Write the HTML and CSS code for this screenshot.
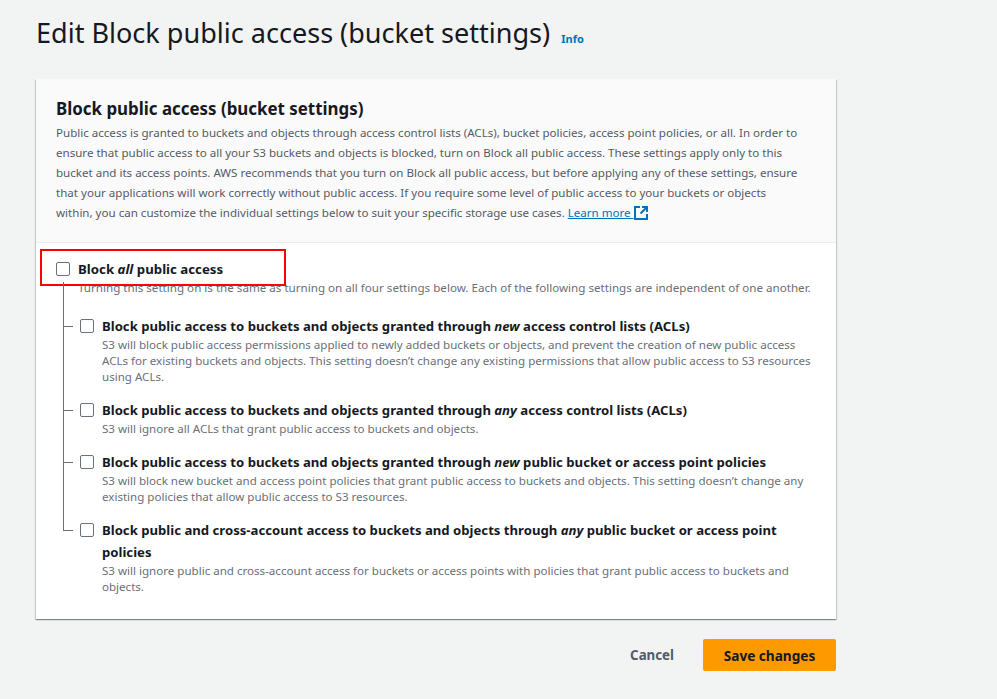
FILE: index.html
```html
<!DOCTYPE html>
<html lang="en">
<head>
<meta charset="utf-8">
<title>Edit Block public access (bucket settings)</title>
<link rel="stylesheet" href="styles.css">
</head>
<body>
<main class="page">
  <header class="page-header">
    <h1>Edit Block public access (bucket settings)</h1>
    <a class="info" href="#">Info</a>
  </header>
  <section class="card">
    <div class="card-head">
      <h2>Block public access (bucket settings)</h2>
      <p>Public access is granted to buckets and objects through access control lists (ACLs), bucket policies, access point policies, or all. In order to<br>ensure that public access to all your S3 buckets and objects is blocked, turn on Block all public access. These settings apply only to this<br>bucket and its access points. AWS recommends that you turn on Block all public access, but before applying any of these settings, ensure<br>that your applications will work correctly without public access. If you require some level of public access to your buckets or objects<br>within, you can customize the individual settings below to suit your specific storage use cases. <a class="learn" href="#">Learn more </a><svg class="ext" width="14" height="14" viewBox="0 0 14 14" aria-hidden="true"><path d="M6 1H1V13H13V8" fill="none" stroke="#0073bb" stroke-width="2"/><path d="M8 1H13V6" fill="none" stroke="#0073bb" stroke-width="2"/><path d="M12.500 1.500L6.500 7.500" fill="none" stroke="#0073bb" stroke-width="2"/></svg></p>
    </div>
    <div class="card-body">
      <div class="master">
        <span class="check"></span>
        <strong class="master-label">Block <em>all</em> public access</strong>
      </div>
      <p class="master-desc">Turning this setting on is the same as turning on all four settings below. Each of the following settings are independent of one another.</p>
      <span class="highlight"></span>
      <ul class="tree">
        <li class="opt opt-1">
          <span class="check"></span>
          <div>
            <strong>Block public access to buckets and objects granted through <em>new</em> access control lists (ACLs)</strong>
            <p>S3 will block public access permissions applied to newly added buckets or objects, and prevent the creation of new public access<br>ACLs for existing buckets and objects. This setting doesn’t change any existing permissions that allow public access to S3 resources<br>using ACLs.</p>
          </div>
        </li>
        <li class="opt opt-2">
          <span class="check"></span>
          <div>
            <strong>Block public access to buckets and objects granted through <em>any</em> access control lists (ACLs)</strong>
            <p>S3 will ignore all ACLs that grant public access to buckets and objects.</p>
          </div>
        </li>
        <li class="opt opt-3">
          <span class="check"></span>
          <div>
            <strong>Block public access to buckets and objects granted through <em>new</em> public bucket or access point policies</strong>
            <p>S3 will block new bucket and access point policies that grant public access to buckets and objects. This setting doesn’t change any<br>existing policies that allow public access to S3 resources.</p>
          </div>
        </li>
        <li class="opt opt-4">
          <span class="check"></span>
          <div>
            <strong>Block public and cross-account access to buckets and objects through <em>any</em> public bucket or access point<br>policies</strong>
            <p>S3 will ignore public and cross-account access for buckets or access points with policies that grant public access to buckets and<br>objects.</p>
          </div>
        </li>
      </ul>
    </div>
  </section>
  <footer class="actions">
    <a class="cancel" href="#">Cancel</a>
    <button class="save" type="button">Save changes</button>
  </footer>
</main>
</body>
</html>
```
FILE: styles.css
```css
* { box-sizing: border-box; }
html, body { margin: 0; padding: 0; }
body {
  background: #f2f3f3;
  color: #16191f;
  font-family: "Noto Sans", "Open Sans", sans-serif;
  height: 699px;
  overflow: hidden;
}
.page { width: 836px; margin-left: 36px; padding-top: 14px; }
.page-header { display: flex; align-items: baseline; height: 65px; }
h1 { margin: 0; font-size: 27.050px; font-weight: 400; line-height: 38px; }
.info { margin-left: 11px; font-size: 11px; font-weight: 700; color: #0073bb; text-decoration: none; }
.card {
  width: 800px;
  background: #fff;
  box-shadow: 0 1px 1px 0 rgba(0,28,36,.3), 1px 1px 1px 0 rgba(0,28,36,.15), -1px 1px 1px 0 rgba(0,28,36,.15);
  position: relative;
}
.card-head {
  height: 164px;
  padding: 19px 20px 0;
  background: #fafafa;
  border-bottom: 1px solid #eaeded;
}
h2 { margin: 0; font-size: 16.900px; font-weight: 700; line-height: 22px; }
.card-head p { margin: 3px 0 0; font-size: 11.570px; line-height: 20px; color: #545b64; white-space: nowrap; }
.learn { color: #0073bb; }
.ext { vertical-align: -3px; }
.card-body { position: relative; padding: 16px 0 0 20px; height: 376px; }
.check {
  display: block;
  flex: none;
  width: 14px;
  height: 14px;
  background: #fff;
  border: 1px solid #687078;
  border-radius: 2px;
}
.master { display: flex; align-items: center; gap: 8px; height: 20px; }
.master-label { font-size: 13.250px; line-height: 20px; }
.master-desc { margin: 0 0 0 22px; font-size: 11.620px; line-height: 17px; color: #687078; white-space: nowrap; }
.highlight {
  position: absolute;
  left: 4px;
  top: 6px;
  width: 246px;
  height: 37px;
  border: 2px solid #f00;
  pointer-events: none;
}
.tree { list-style: none; margin: 0; padding: 0; position: relative; }
.tree::before {
  content: "";
  position: absolute;
  left: 7px;
  top: -33px;
  bottom: 64px;
  width: 1px;
  background: #687078;
}
.opt { display: flex; gap: 8px; margin-left: 24px; position: relative; }
.opt::before {
  content: "";
  position: absolute;
  left: -17px;
  top: 11px;
  width: 10px;
  height: 1px;
  background: #687078;
}
.opt .check { margin-top: 4px; }
.opt strong { display: block; font-size: 13.150px; line-height: 22px; white-space: nowrap; }
.opt p { margin: 0; font-size: 11.570px; line-height: 16px; color: #687078; white-space: nowrap; }
.opt-1 { margin-top: 19px; }
.opt-2 { margin-top: 14px; }
.opt-3 { margin-top: 14px; }
.opt-4 { margin-top: 14px; }
.actions { display: flex; justify-content: flex-end; align-items: center; width: 800px; height: 32px; margin-top: 20px; gap: 29px; }
.cancel { font-size: 13.300px; font-weight: 700; color: #545b64; text-decoration: none; }
.save {
  width: 133px;
  height: 32px;
  background: #ff9900;
  border: 0;
  border-radius: 2px;
  color: #16191f;
  font: 700 13.600px "Noto Sans", "Open Sans", sans-serif;
  padding: 0;
}
```
